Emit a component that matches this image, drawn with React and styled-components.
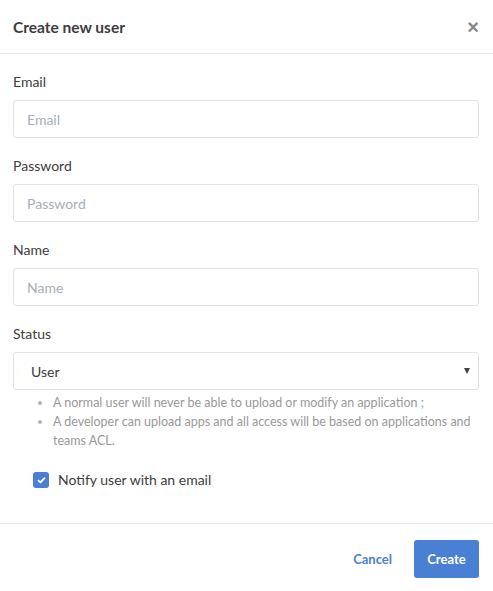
import React from "react";
import styled, { createGlobalStyle } from "styled-components";

const Global = createGlobalStyle`
  html, body {
    margin: 0;
    padding: 0;
    background: #fff;
  }
  body {
    font-family: "Lato", "Liberation Sans", sans-serif;
    color: #3d3d3d;
  }
  * { box-sizing: border-box; }
`;

const Modal = styled.div`
  width: 493px;
  background: #fff;
`;

const Header = styled.div`
  height: 54px;
  display: flex;
  align-items: center;
  justify-content: space-between;
  padding: 0 14px 0 13px;
  border-bottom: 1px solid #e3e6ea;
`;

const Title = styled.h3`
  margin: 0;
  font-size: 15.5px;
  font-weight: 700;
  color: #3d3d3d;
`;

const Close = styled.button`
  border: 0;
  background: none;
  padding: 0;
  font-size: 20px;
  line-height: 1;
  font-weight: 700;
  color: #888;
  cursor: pointer;
  font-family: "Liberation Sans", sans-serif;
`;

const Body = styled.div`
  padding: 18px 14px 17px 13px;
`;

const Group = styled.div`
  display: flex;
  flex-direction: column;
  gap: 8px;
  margin-bottom: 18px;
`;

const Label = styled.label`
  font-size: 14px;
  line-height: 20px;
  color: #3d3d3d;
`;

const Input = styled.input`
  height: 38px;
  width: 100%;
  border: 1px solid #dfe4ea;
  border-radius: 3px;
  padding: 0 13px;
  font-size: 14px;
  font-family: inherit;
  color: #3d3d3d;
  outline: none;
  &::placeholder {
    color: #a6aeb8;
  }
`;

const SelectBox = styled.div`
  position: relative;
  height: 38px;
  border: 1px solid #dfe4ea;
  border-radius: 3px;
  display: flex;
  align-items: center;
  padding: 0 17px;
  font-size: 14px;
  color: #3d3d3d;
`;

const Arrow = styled.span`
  position: absolute;
  right: 8px;
  top: 15px;
  width: 0;
  height: 0;
  border-left: 3.5px solid transparent;
  border-right: 3.5px solid transparent;
  border-top: 6px solid #444;
`;

const Help = styled.ul`
  margin: 3px 0 0;
  padding-left: 40px;
  font-size: 12.5px;
  line-height: 19px;
  color: #999;
  li::marker {
    color: #b5b5b5;
  }
`;

const CheckRow = styled.label`
  display: flex;
  align-items: center;
  gap: 9px;
  margin: 21px 0 18px 20px;
  font-size: 14px;
  color: #3d3d3d;
`;

const Box = styled.span`
  width: 16px;
  height: 16px;
  border-radius: 3px;
  background: #4a7fd1;
  display: flex;
  align-items: center;
  justify-content: center;
`;

const Footer = styled.div`
  border-top: 1px solid #e3e6ea;
  display: flex;
  justify-content: flex-end;
  align-items: center;
  gap: 22px;
  padding: 16px 14px;
`;

const CancelBtn = styled.button`
  border: 0;
  background: none;
  font-family: inherit;
  font-size: 13px;
  font-weight: 700;
  color: #4a7fd1;
  padding: 0;
`;

const CreateBtn = styled.button`
  height: 38px;
  width: 65px;
  border: 0;
  border-radius: 3px;
  background: #4a80d3;
  color: #fff;
  font-family: inherit;
  font-size: 13px;
  font-weight: 700;
`;

const Field = ({ label, placeholder, type }) => (
  <Group>
    <Label>{label}</Label>
    <Input type={type || "text"} placeholder={placeholder} />
  </Group>
);

export default function App() {
  return (
    <Modal>
      <Global />
      <Header>
        <Title>Create new user</Title>
        <Close>×</Close>
      </Header>
      <Body>
        <Field label="Email" placeholder="Email" />
        <Field label="Password" placeholder="Password" type="password" />
        <Field label="Name" placeholder="Name" />
        <Group style={{ marginBottom: 0 }}>
          <Label>Status</Label>
          <SelectBox>
            User
            <Arrow />
          </SelectBox>
        </Group>
        <Help>
          <li>A normal user will never be able to upload or modify an application ;</li>
          <li>A developer can upload apps and all access will be based on applications and teams ACL.</li>
        </Help>
        <CheckRow>
          <Box>
            <svg width="9" height="8" viewBox="0 0 9 8">
              <path d="M1 4.2 L3.4 6.4 L8 1.6" stroke="#fff" strokeWidth="1.8" fill="none" />
            </svg>
          </Box>
          Notify user with an email
        </CheckRow>
      </Body>
      <Footer>
        <CancelBtn>Cancel</CancelBtn>
        <CreateBtn>Create</CreateBtn>
      </Footer>
    </Modal>
  );
}
